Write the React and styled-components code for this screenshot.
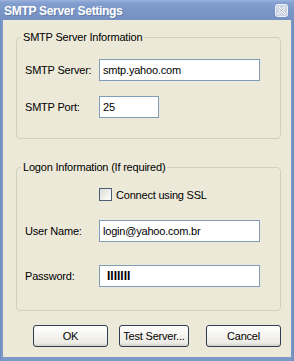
import React from 'react'
import styled, { createGlobalStyle } from 'styled-components'

const Global = createGlobalStyle`
  html, body {
    margin: 0;
    padding: 0;
    background: #ece9d8;
  }
  body {
    font-family: "Liberation Sans", Arial, sans-serif;
    font-size: 11px;
    color: #000;
  }
`

function CloseIcon() {
    return (
        <svg width="13" height="13" viewBox="0 0 13 13">
            <rect x="0.5" y="0.5" width="12" height="12" rx="2" fill="#c9d1e2" stroke="#eef1f7" />
            <path d="M3.5 3.5 L9.5 9.5 M9.5 3.5 L3.5 9.5" stroke="#ffffff" strokeWidth="2.2" strokeLinecap="round" />
            <path d="M3.5 3.5 L9.5 9.5 M9.5 3.5 L3.5 9.5" stroke="#9ba5bb" strokeWidth="0.8" strokeLinecap="round" />
        </svg>
    )
}

function App() {
    return (
        <>
            <Global />
            <Window>
                <TitleBar>
                    <Title>SMTP Server Settings</Title>
                    <CloseBtn>
                        <CloseIcon />
                    </CloseBtn>
                </TitleBar>
                <Body>
                    <Group $top={17} $pad="21px 0 20px">
                        <Legend>SMTP Server Information</Legend>
                        <Row>
                            <Label>SMTP Server:</Label>
                            <Field readOnly value="smtp.yahoo.com" $w={161} />
                        </Row>
                        <Row $gap={15}>
                            <Label>SMTP Port:</Label>
                            <Field readOnly value="25" $w={60} />
                        </Row>
                    </Group>
                    <Group $top={28} $pad="20px 0 23px">
                        <Legend>Logon Information (If required)</Legend>
                        <CheckRow>
                            <CheckBox />
                            <span>Connect using SSL</span>
                        </CheckRow>
                        <Row $gap={19}>
                            <Label>User Name:</Label>
                            <Field readOnly value="login@yahoo.com.br" $w={161} />
                        </Row>
                        <Row $gap={23}>
                            <Label>Password:</Label>
                            <Field readOnly value="IIIIIII" $w={161} $secret />
                        </Row>
                    </Group>
                    <Buttons>
                        <Button $w={75}>OK</Button>
                        <Button $w={70}>Test Server...</Button>
                        <Button $w={75} $push>Cancel</Button>
                    </Buttons>
                </Body>
            </Window>
        </>
    )
}

export default App


const Window = styled.div`
    width: 294px;
    height: 361px;
    display: flex;
    flex-direction: column;
    background: linear-gradient(90deg, #6f8bbd 0px, #7d99c9 2px, #7d99c9 291px, #6f8bbd 294px);
    box-sizing: border-box;
`

const TitleBar = styled.div`
    height: 20px;
    display: flex;
    align-items: center;
    justify-content: space-between;
    padding: 0 6px 0 4px;
    background: linear-gradient(180deg, #9bb2dc 0px, #839fd0 3px, #7b97c8 10px, #7591c2 20px);
`

const Title = styled.span`
    color: #ffffff;
    font-weight: bold;
    font-size: 12px;
    letter-spacing: -0.3px;
    padding-top: 2px;
    text-shadow: 1px 1px 0 rgba(60, 80, 120, 0.35);
`

const CloseBtn = styled.span`
    display: flex;
    margin-top: 1px;
`

const Body = styled.div`
    flex: 1;
    margin: 0 3px 4px;
    background: #ece9d8;
    display: flex;
    flex-direction: column;
`

const Group = styled.div`
    position: relative;
    margin: ${p => p.$top}px 10px 0 13px;
    padding: ${p => p.$pad};
    border: 1px solid #d0d0bf;
    border-radius: 4px;
    display: flex;
    flex-direction: column;
`

const Legend = styled.span`
    position: absolute;
    top: -7px;
    left: 4px;
    padding: 0 2px;
    line-height: 13px;
    background: #ece9d8;
    letter-spacing: -0.2px;
`

const Row = styled.div`
    display: flex;
    align-items: center;
    margin-top: ${p => p.$gap || 0}px;
    padding-left: 8px;
`

const Label = styled.span`
    width: 74px;
    flex: none;
    letter-spacing: -0.2px;
`

const Field = styled.input`
    width: ${p => p.$w}px;
    height: 22px;
    box-sizing: border-box;
    border: 1px solid #7f9db9;
    background: #ffffff;
    padding: 0 0 0 ${p => (p.$secret ? 7 : 3)}px;
    margin: 0;
    font-family: "Liberation Sans", Arial, sans-serif;
    font-size: ${p => (p.$secret ? 12 : 11)}px;
    font-weight: ${p => (p.$secret ? 'bold' : 'normal')};
    letter-spacing: ${p => (p.$secret ? '0' : '-0.2px')};
    color: #000;
    outline: none;
`

const CheckRow = styled.label`
    display: flex;
    align-items: center;
    gap: 4px;
    padding-left: 82px;
    height: 13px;
    letter-spacing: -0.2px;
`

const CheckBox = styled.span`
    width: 13px;
    height: 13px;
    box-sizing: border-box;
    border: 1px solid #4b5f73;
    background: linear-gradient(135deg, #dcdcd7, #ffffff);
    flex: none;
`

const Buttons = styled.div`
    display: flex;
    gap: 11px;
    margin-top: 14px;
    padding-left: 30px;
`

const Button = styled.button`
    width: ${p => p.$w}px;
    height: 22px;
    margin: 0 0 0 ${p => (p.$push ? 6 : 0)}px;
    padding: 0;
    border: 1px solid #2d3e52;
    border-radius: 3px;
    background: linear-gradient(180deg, #ffffff 0%, #f4f3ee 50%, #ecebe6 85%, #d6d0c5 100%);
    font-family: "Liberation Sans", Arial, sans-serif;
    font-size: 11px;
    letter-spacing: -0.2px;
    color: #000;
`
